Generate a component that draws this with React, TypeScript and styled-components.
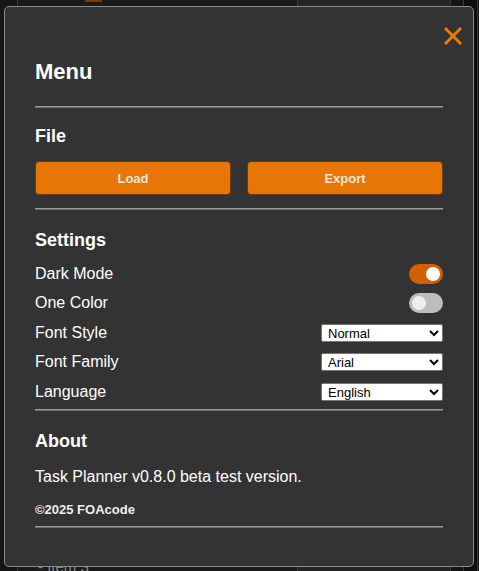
import styled, { createGlobalStyle } from 'styled-components'

const GlobalStyle = createGlobalStyle`
  html, body {
    margin: 0;
    padding: 0;
    background: #111;
    font-family: "Liberation Sans", Arial, sans-serif;
  }
`

const Backdrop = styled.div`
  position: relative;
  width: 479px;
  height: 571px;
  overflow: hidden;
  display: flex;
  background: #151515;
`

const BgColumn = styled.div<{ $w: number; $bg: string }>`
  width: ${({ $w }) => $w}px;
  flex-shrink: 0;
  background: ${({ $bg }) => $bg};
  border-right: 1px solid #3a3a3a;
`

const BgItem = styled.div`
  position: absolute;
  left: 38px;
  top: 558px;
  color: #888;
  font-size: 15px;
  line-height: 18px;
`

const BgTab = styled.div`
  position: absolute;
  left: 85px;
  top: 0;
  width: 17px;
  height: 2px;
  background: #7a3c00;
`

const Modal = styled.div`
  position: absolute;
  top: 6px;
  left: 4px;
  width: 408px;
  height: 499px;
  padding: 30px;
  background: #333;
  border: 1px solid #8a8a8a;
  border-radius: 5px;
  color: #fff;
`

const Close = styled.button`
  position: absolute;
  top: 15px;
  right: 6px;
  width: 28px;
  height: 28px;
  padding: 0;
  border: none;
  background: none;
  cursor: pointer;
  display: flex;
  align-items: center;
  justify-content: center;
`

const Title = styled.h2`
  margin: 20px 0 0;
  font-size: 22px;
  font-weight: 700;
  line-height: 30px;
`

const SectionTitle = styled.h3`
  margin: 0;
  font-size: 18px;
  font-weight: 700;
  line-height: 24px;
`

const Divider = styled.hr<{ $top: number; $bottom: number }>`
  margin: ${({ $top }) => $top}px 0 ${({ $bottom }) => $bottom}px;
  border: none;
  height: 2px;
  background: #9a9a9a;
  border-bottom: 1px solid #6a6a6a;
  box-sizing: border-box;
`

const ButtonRow = styled.div`
  display: grid;
  grid-template-columns: 1fr 1fr;
  gap: 16px;
  margin-top: 13px;
`

const OrangeButton = styled.button`
  height: 34px;
  border: 1px solid #6a3a10;
  border-radius: 4px;
  background: #e87605;
  color: #f2e6da;
  font-family: "Liberation Sans", Arial, sans-serif;
  font-size: 13px;
  font-weight: 700;
  cursor: pointer;
`

const SettingsList = styled.div`
  display: flex;
  flex-direction: column;
  margin-top: 7px;
`

const Row = styled.div`
  display: flex;
  align-items: center;
  justify-content: space-between;
  height: 29.5px;
  font-size: 16px;
`

const Toggle = styled.div<{ $on: boolean }>`
  position: relative;
  width: 34px;
  height: 20px;
  border-radius: 10px;
  background: ${({ $on }) => ($on ? '#d06100' : '#bdbdbd')};
  &::after {
    content: '';
    position: absolute;
    top: 3px;
    left: ${({ $on }) => ($on ? '17px' : '3px')};
    width: 14px;
    height: 14px;
    border-radius: 50%;
    background: ${({ $on }) => ($on ? '#fff' : '#eee')};
  }
`

const Select = styled.select`
  width: 122px;
  height: 18px;
  padding: 0 0 0 2px;
  font-family: "Liberation Sans", Arial, sans-serif;
  font-size: 13px;
  color: #000;
  background: #fff;
  border: 1px solid #767676;
  border-radius: 2px;
`

const Text = styled.p`
  margin: 14px 0 0;
  font-size: 16px;
  line-height: 20px;
`

const Copyright = styled.p`
  margin: 15px 0 0;
  font-size: 13px;
  font-weight: 700;
  line-height: 16px;
  color: #eee;
`

function CloseIcon() {
  return (
    <svg width="18" height="18" viewBox="0 0 18 18">
      <path d="M2 2 L16 16 M16 2 L2 16" stroke="#ea7a08" strokeWidth="3" strokeLinecap="square" />
    </svg>
  )
}

export default function App() {
  return (
    <>
      <GlobalStyle />
      <Backdrop>
        <BgColumn $w={17} $bg="#151515" />
        <BgColumn $w={279} $bg="#1a1a1a" />
        <BgColumn $w={152} $bg="#242424" />
        <BgColumn $w={12} $bg="#141414" />
        <BgColumn $w={13} $bg="#0e0e0e" />
        <BgTab />
        <BgItem>- Item 3</BgItem>
        <Modal>
          <Close aria-label="Close">
            <CloseIcon />
          </Close>
          <Title>Menu</Title>
          <Divider $top={19} $bottom={16} />
          <SectionTitle>File</SectionTitle>
          <ButtonRow>
            <OrangeButton>Load</OrangeButton>
            <OrangeButton>Export</OrangeButton>
          </ButtonRow>
          <Divider $top={13} $bottom={18} />
          <SectionTitle>Settings</SectionTitle>
          <SettingsList>
            <Row>
              Dark Mode
              <Toggle $on />
            </Row>
            <Row>
              One Color
              <Toggle $on={false} />
            </Row>
            <Row>
              Font Style
              <Select defaultValue="Normal">
                <option>Normal</option>
                <option>Bold</option>
              </Select>
            </Row>
            <Row>
              Font Family
              <Select defaultValue="Arial">
                <option>Arial</option>
                <option>Verdana</option>
              </Select>
            </Row>
            <Row>
              Language
              <Select defaultValue="English">
                <option>English</option>
                <option>Español</option>
              </Select>
            </Row>
          </SettingsList>
          <Divider $top={2} $bottom={18} />
          <SectionTitle>About</SectionTitle>
          <Text>Task Planner v0.8.0 beta test version.</Text>
          <Copyright>©2025 FOAcode</Copyright>
          <Divider $top={8} $bottom={0} />
        </Modal>
      </Backdrop>
    </>
  )
}
